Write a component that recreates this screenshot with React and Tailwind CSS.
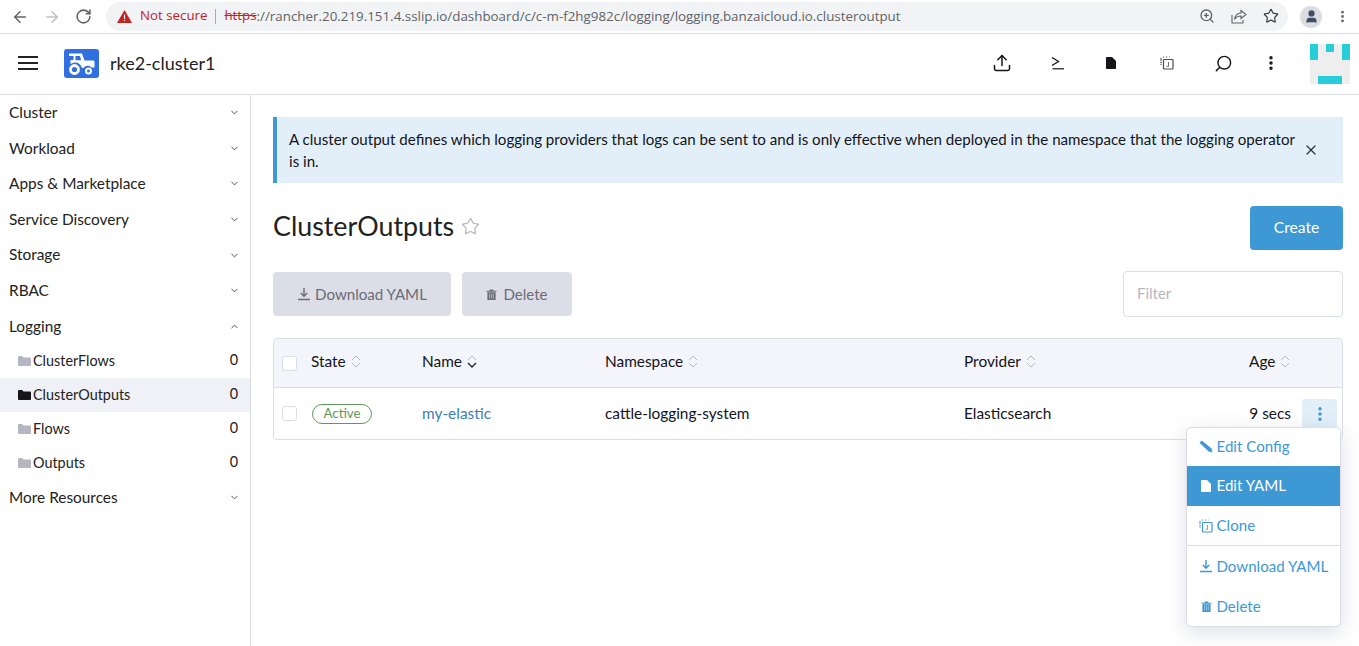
import React from "react";
import { ArrowLeft, ArrowRight, RotateCw, ZoomIn, Star, User, EllipsisVertical, ChevronDown, ChevronUp, X, Upload, Search } from "lucide-react";

const Folder = ({ c }) => (
  <svg width="13" height="10" viewBox="0 0 13 10" className="mr-[2px] shrink-0"><path d="M0 1.2C0 .5.5 0 1.2 0h3l1.3 1.5h6.3c.7 0 1.2.5 1.2 1.2v6c0 .7-.5 1.3-1.2 1.3H1.2C.5 10 0 9.4 0 8.7z" fill={c} /></svg>
);
const Download = ({ c, s = 14 }) => (
  <svg width={s} height={s} viewBox="0 0 14 14" fill="none" stroke={c} strokeWidth="1.4"><path d="M7 1v8M3.8 6 7 9.2 10.2 6M1 12.500h12" /></svg>
);
const Trash = ({ c, s = 12 }) => (
  <svg width={s} height={s} viewBox="0 0 12 12"><path d="M.5 1.800h11V3H.5zM4 .5h4v1.300H4zM1.500 3.600h9V12h-9z" fill={c} /><path d="M4 5v5.500M6 5v5.500M8 5v5.500" stroke="#fff" strokeWidth=".7" opacity=".7" /></svg>
);
const FileIco = ({ c, w = 10, h = 12 }) => (
  <svg width={w} height={h} viewBox="0 0 10 12"><path d="M0 1c0-.6.4-1 1-1h5l4 4v7c0 .6-.4 1-1 1H1c-.6 0-1-.4-1-1z" fill={c} /></svg>
);
const CloneIco = ({ c, s = 14 }) => (
  <svg width={s} height={s} viewBox="0 0 14 14" fill="none" stroke={c}><path d="M1 9V1.500h.6M3 1h1.500M6 1h1.500M9 1h.5M1 3v1M1 6v1" strokeWidth="1" strokeDasharray="1.200 .8" /><rect x="3.500" y="3.500" width="9.500" height="9.500" rx=".8" strokeWidth="1.200" /><path d="M8.500 6v4.300H6.500" strokeWidth=".8" /></svg>
);
const SortIco = ({ dark }) => (
  <svg width="10" height="13" viewBox="0 0 10 13" fill="none" className="ml-[5px]"><path d="M1 5 5 1l4 4" stroke="#b6b8c4" strokeWidth="1" /><path d="M1 8l4 4 4-4" stroke={dark ? "#222" : "#b6b8c4"} strokeWidth={dark ? "1.300" : "1"} /></svg>
);

const Nav = ({ label, open }) => (
  <div className="h-[35.6px] flex items-center justify-between pl-[9px] pr-[10px] text-[15.4px] text-[#222]">
    <span className="-mt-[0.4px]">{label}</span>
    {open ? <ChevronUp size={11} strokeWidth={2} color="#444" /> : <ChevronDown size={11} strokeWidth={2} color="#444" />}
  </div>
);
const Sub = ({ label, active }) => (
  <div className={`h-[34px] flex items-center pl-[18px] pr-[12px] text-[14.4px] text-[#222] ${active ? "bg-[#f0f1f6]" : ""}`}>
    <Folder c={active ? "#141419" : "#b6b6c2"} />
    <span className="flex-1">{label}</span>
    <span className="-mt-[2px]">0</span>
  </div>
);
const Menu = ({ icon, label, active, h = "h-[40px]", up = "" }) => (
  <div className={`${h} flex items-center pl-[12px] gap-[3.500px] text-[15.1px] ${active ? "bg-[#3d98d3] text-white" : "text-[#3d98d3]"}`}>
    <span className="w-[14px] flex justify-center">{icon}</span>
    <span className={up}>{label}</span>
  </div>
);

export default function App() {
  return (
    <div className="w-[1359px] h-[646px] overflow-hidden bg-white flex flex-col font-['Lato',sans-serif]">
      <div className="h-[34px] shrink-0 border-b border-[#d9dadc] flex items-center font-['Open_Sans',sans-serif]">
        <div className="flex items-center pl-[11px] gap-[14px] w-[106px]">
          <ArrowLeft size={18} color="#5f6368" strokeWidth={2} />
          <ArrowRight size={18} color="#bdc1c6" strokeWidth={2} />
          <RotateCw size={17} color="#5f6368" strokeWidth={2.200} />
        </div>
        <div className="h-[29px] w-[1182px] mt-[-1px] rounded-full bg-[#f1f3f4] flex items-center pl-[11px] pr-[9px] text-[13.3px] text-[#5f6368]">
          <svg width="15" height="13" viewBox="0 0 15 13"><path d="M7.500 0 15 13H0z" fill="#c5221f" /><path d="M6.900 4.500h1.200v4.200H6.900zM6.900 9.700h1.200v1.200H6.900z" fill="#fff" /></svg>
          <span className="ml-[8px] text-[#c5221f]">Not secure</span>
          <span className="mx-[8px] w-px h-[15px] bg-[#a8abaf]" />
          <span className="text-[#c5221f] line-through">https</span>
          <span className="text-[13.37px]">://rancher.20.219.151.4.sslip.io/dashboard/c/c-m-f2hg982c/logging/logging.banzaicloud.io.clusteroutput</span>
          <span className="flex-1" />
          <ZoomIn size={16} color="#5f6368" />
          <svg width="16" height="15" viewBox="0 0 16 15" fill="none" stroke="#5f6368" strokeWidth="1.100" className="ml-[16px]"><path d="M10 1.500 15 5.500l-5 4V7C7 7 5 8 3.500 10.500 4 7 6 4.300 10 4zM1 6v8h11v-3" /></svg>
          <Star size={16} color="#3c4043" strokeWidth={1.800} className="ml-[16px]" />
        </div>
        <div className="ml-[12px] w-[22px] h-[22px] rounded-full bg-[#dadce0] flex items-center justify-center">
          <User size={15} color="#3f4e62" fill="#3f4e62" />
        </div>
        <EllipsisVertical size={15} color="#5f6368" strokeWidth={2.500} className="ml-[13px]" />
      </div>

      <div className="h-[61px] shrink-0 border-b border-[#dcdee7] flex items-center pl-[18px]">
        <div className="flex flex-col gap-[4px] w-[20px] -mt-[2px]">
          <span className="h-[2px] bg-[#222]" /><span className="h-[2px] bg-[#222]" /><span className="h-[2px] bg-[#222]" />
        </div>
        <div className="ml-[26px] w-[35px] h-[29px] -mt-[1px] rounded-[3px] bg-[#2f6fe0] flex items-center justify-center">
          <svg width="29" height="24" viewBox="0 0 29 24" fill="none">
            <path d="M2 1.500h13l2.500 7H26c1 0 1.500.5 1.500 1.500v5.500h-3c-2-2.500-6-2.500-8 .5h-1.500c-1-3.500-3.500-5.500-7-5.500-1.500 0-3 .5-4.500 1.500V8h3V4H2z" fill="#fff" />
            <path d="M8.500 4h4.500l1.200 4.300H8.500z" fill="#2f6fe0" />
            <circle cx="7.500" cy="17.500" r="4" stroke="#fff" strokeWidth="2.800" />
            <circle cx="21.500" cy="19" r="2.500" stroke="#fff" strokeWidth="2" />
          </svg>
        </div>
        <span className="ml-[11px] text-[18px] text-[#222] -mt-[1px]">rke2-cluster1</span>
        <div className="flex-1" />
        <div className="flex items-center -mt-[2px]">
          <Upload size={20} color="#141419" strokeWidth={1.800} className="mr-[39px]" />
          <svg width="14" height="14" viewBox="0 0 14 14" fill="none" stroke="#141419" className="mr-[41px]"><path d="M1 1.500 7.500 5.500 1 9.500" strokeWidth="1.300" /><path d="M1.500 12.800H13" strokeWidth="1.200" /></svg>
          <FileIco c="#141419" />
          <span className="ml-[44px]"><CloneIco c="#4a4b52" /></span>
          <Search size={19} color="#141419" strokeWidth={1.800} className="ml-[40px] -scale-x-100" />
          <EllipsisVertical size={18} color="#141419" strokeWidth={2.600} className="ml-[29px]" />
        </div>
        <div className="ml-[30px] mr-[9px] w-[40px] h-[40px] bg-[#eeeeee] flex flex-col">
          <div className="h-[16px] flex justify-between">
            <span className="w-[8px] bg-[#27cdd8]" />
            <span className="w-[8px] h-[8px] bg-[#27cdd8]" />
            <span className="w-[8px] bg-[#27cdd8]" />
          </div>
          <span className="mt-[16px] mx-[8px] h-[8px] bg-[#27cdd8]" />
        </div>
      </div>

      <div className="flex-1 flex min-h-0">
        <aside className="w-[251px] shrink-0 border-r border-[#dcdee7]">
          {["Cluster", "Workload", "Apps & Marketplace", "Service Discovery", "Storage", "RBAC"].map((l) => <Nav key={l} label={l} />)}
          <Nav label="Logging" open />
          <Sub label="ClusterFlows" />
          <Sub label="ClusterOutputs" active />
          <Sub label="Flows" />
          <Sub label="Outputs" />
          <Nav label="More Resources" />
        </aside>

        <main className="flex-1 pt-[22px] pl-[22px] pr-[16px] relative text-[#141419]">
          <div className="h-[66px] bg-[#e2eff8] border-l-[4px] border-[#3d98d3] flex items-center pl-[12px] pr-[24px] text-[15.12px] leading-[22px]">
            <p className="flex-1">A cluster output defines which logging providers that logs can be sent to and is only effective when deployed in the namespace that the logging operator is in.</p>
            <X size={16} color="#30323a" strokeWidth={1.800} className="ml-[6px] shrink-0" />
          </div>

          <div className="mt-[22px] h-[45px] flex items-center justify-between">
            <div className="flex items-center -mt-[2px]">
              <h1 className="text-[26.8px] font-normal text-[#222]">ClusterOutputs</h1>
              <Star size={19} color="#b6b6c2" strokeWidth={1.600} className="ml-[7px]" />
            </div>
            <button className="w-[93px] h-[44px] rounded-[4px] bg-[#3d98d3] text-white text-[15.6px]">Create</button>
          </div>

          <div className="mt-[21px] flex items-center">
            <button className="w-[178px] h-[44px] rounded-[4px] bg-[#dcdee7] text-[#6c6c76] text-[15.1px] flex items-center justify-center gap-[4px]"><Download c="#6c6c76" s={14} /><span className="mt-[1px]">Download YAML</span></button>
            <button className="ml-[11px] w-[110px] h-[44px] rounded-[4px] bg-[#dcdee7] text-[#6c6c76] text-[15.1px] flex items-center justify-center gap-[6px]"><Trash c="#6c6c76" s={11} /><span className="mt-[1px]">Delete</span></button>
            <div className="flex-1" />
            <div className="w-[220px] h-[46px] rounded-[4px] border border-[#dcdee7] bg-white flex items-center pl-[13px] text-[15px] text-[#b6b6c2]"><span className="-mt-[2px]">Filter</span></div>
          </div>

          <div className="mt-[21px] rounded-[4px] border border-[#dcdee7] text-[15.4px]">
            <div className="h-[49px] bg-[#f4f5fa] border-b border-[#dcdee7] rounded-t-[4px] grid grid-cols-[29px_111px_183px_359px_285px_1fr] items-center pl-[8px]">
              <span className="w-[15px] h-[15px] rounded-[3px] border border-[#dcdee7] bg-white" />
              <span className="flex items-center -mt-[2px]">State<SortIco /></span>
              <span className="flex items-center -mt-[2px]">Name<SortIco dark /></span>
              <span className="flex items-center -mt-[2px]">Namespace<SortIco /></span>
              <span className="flex items-center -mt-[2px]">Provider<SortIco /></span>
              <span className="flex items-center -mt-[2px]">Age<SortIco /></span>
            </div>
            <div className="h-[51px] grid grid-cols-[29px_111px_183px_359px_1fr_auto] items-center pl-[8px] pr-[5px]">
              <span className="w-[15px] h-[15px] rounded-[3px] border border-[#dcdee7] bg-white" />
              <span className="w-[60px] h-[20px] ml-[1px] rounded-full border border-[#5d995d] text-[#5d995d] text-[13.3px] flex items-center justify-center">Active</span>
              <span className="text-[#3d7eb5]">my-elastic</span>
              <span>cattle-logging-system</span>
              <span>Elasticsearch</span>
              <div className="flex items-center">
                <span className="mr-[11px]">9 secs</span>
                <div className="w-[35px] h-[29px] rounded-[3px] bg-[#e2eff8] flex items-center justify-center">
                  <EllipsisVertical size={18} color="#3d98d3" strokeWidth={2.600} />
                </div>
              </div>
            </div>
          </div>

          <div className="absolute left-[935px] top-[332px] w-[155px] h-[200px] rounded-[5px] border border-[#dcdee7] bg-white shadow-[0_5px_20px_rgba(120,125,150,0.25)] flex flex-col overflow-hidden">
            <Menu h="h-[38px]" up="-mt-[2px]" label="Edit Config" icon={<svg width="14" height="13" viewBox="0 0 14 13"><path d="M.5 2.800 2.800.5l9.700 8 1 3.800-3.800-.9z" fill="#3d98d3" /></svg>} />
            <Menu label="Edit YAML" active icon={<FileIco c="#fff" />} />
            <Menu label="Clone" icon={<CloneIco c="#3d98d3" />} />
            <div className="h-px bg-[#dcdee7]" />
            <Menu label="Download YAML" icon={<Download c="#3d98d3" s={14} />} />
            <Menu label="Delete" icon={<Trash c="#3d98d3" s={11} />} />
          </div>
        </main>
      </div>
    </div>
  );
}
